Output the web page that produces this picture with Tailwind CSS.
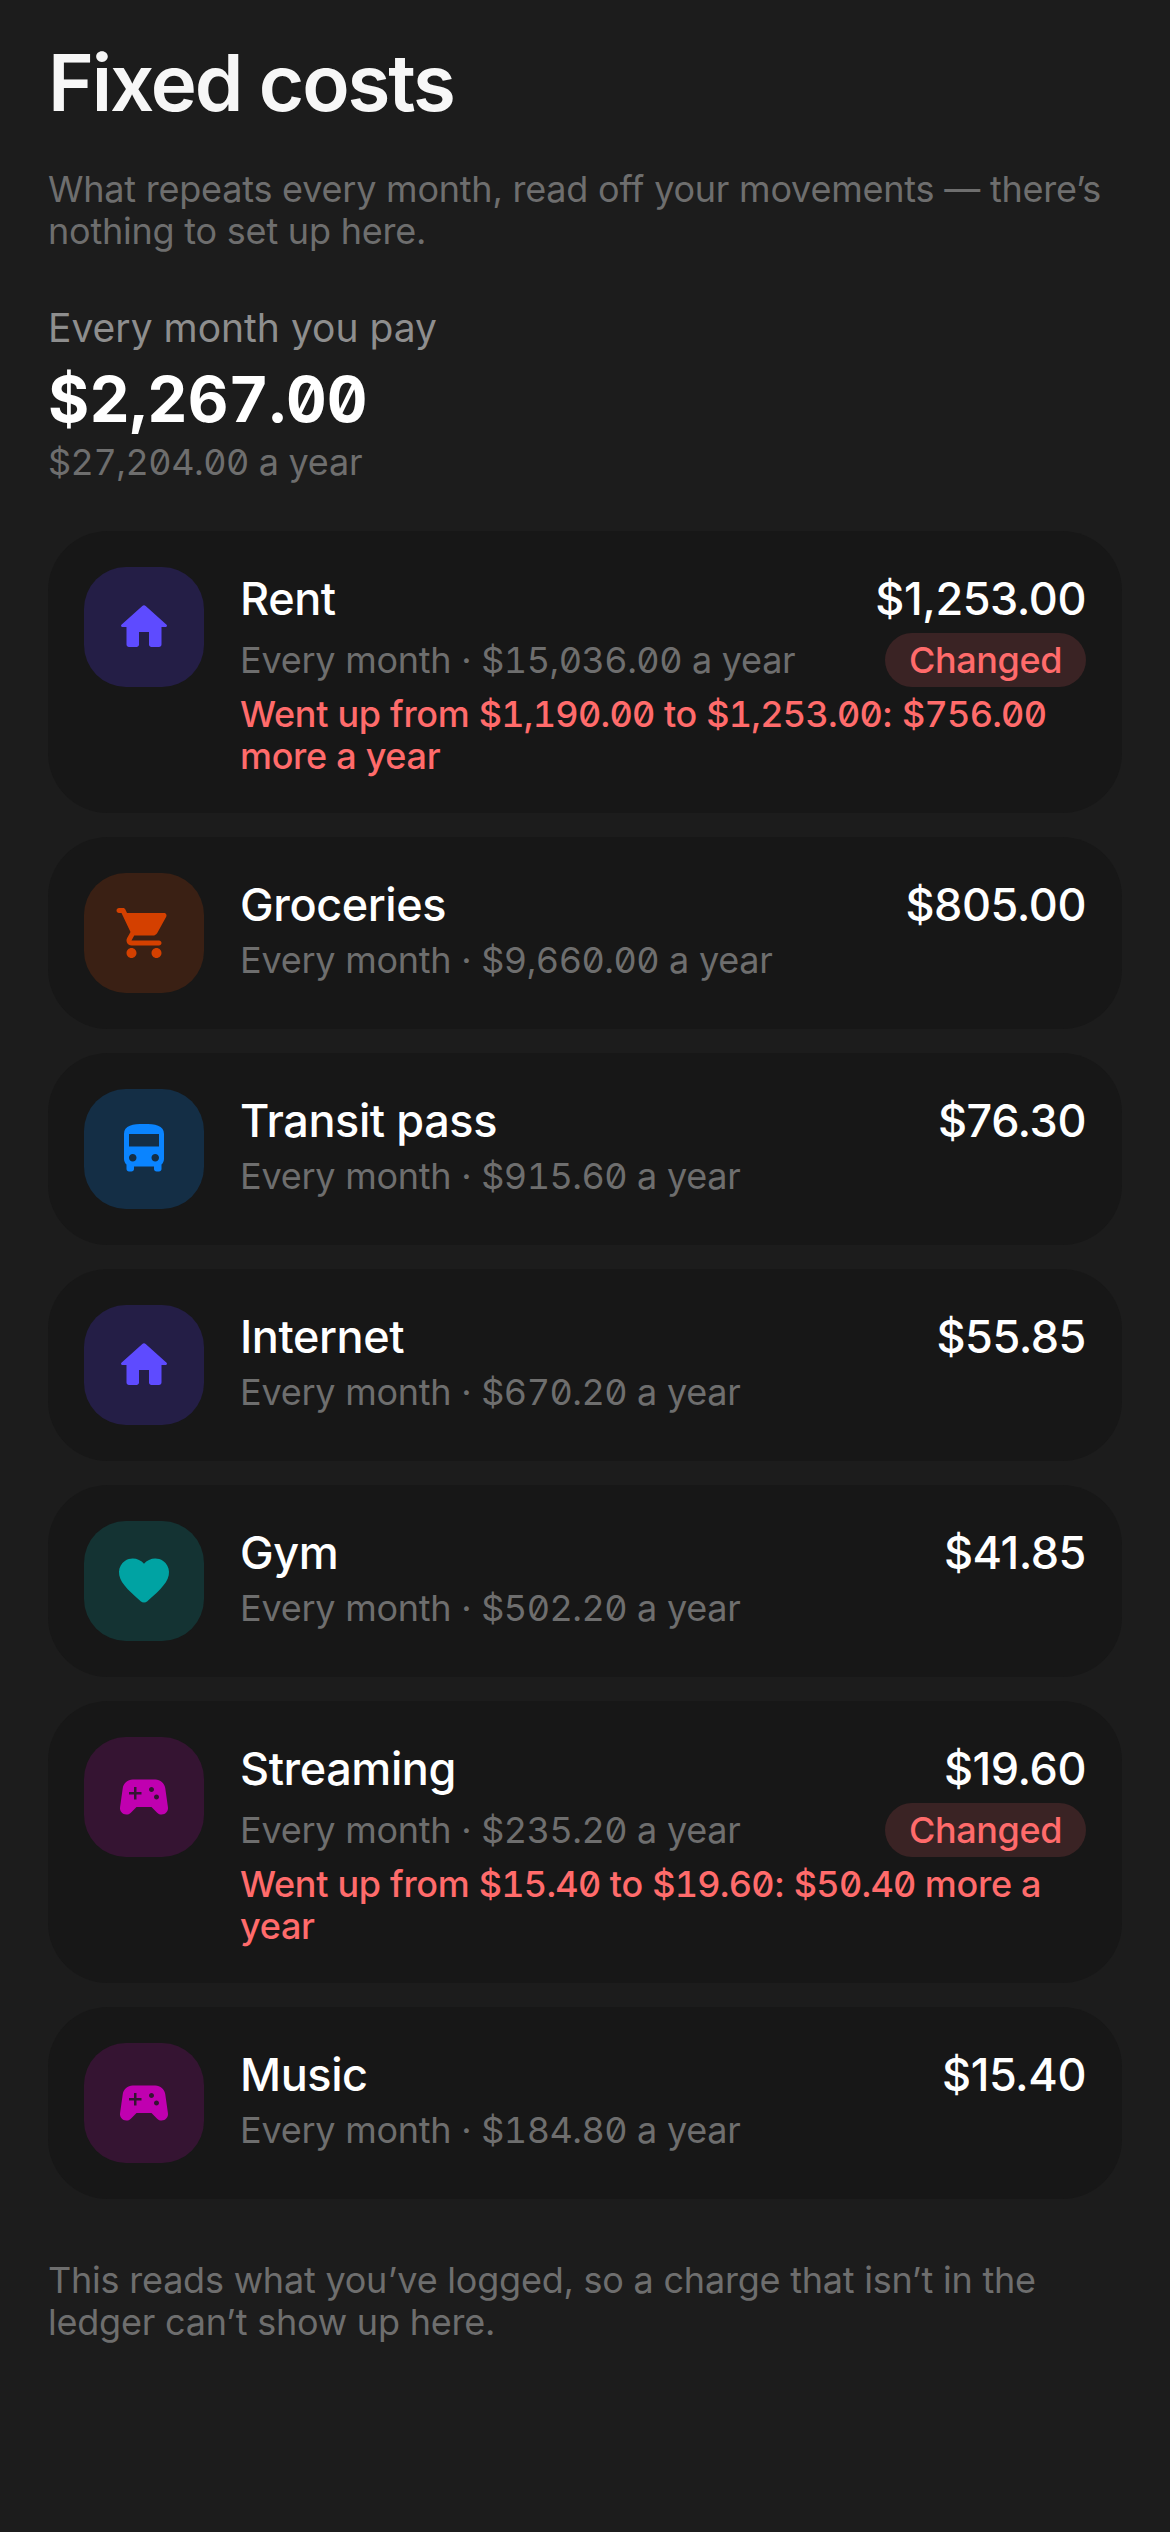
<!DOCTYPE html>
<html lang="en">
<head>
    <meta charset="UTF-8">
    <meta name="viewport" content="width=device-width, initial-scale=1.0">
    <title>Fixed costs</title>
    <script src="https://cdn.jsdelivr.net/npm/@tailwindcss/browser@4"></script>
</head>
<body class="bg-[#1c1c1c] font-['Inter',sans-serif] text-white">
    <div class="w-[1170px] h-[2532px] px-12 pt-[36px]">
        <!-- Header -->
        <h1 class="text-[78px] leading-[94px] font-semibold tracking-[-2.1px] text-[#f7f7f7]">Fixed costs</h1>
        <p class="mt-[38px] text-[36px] leading-[42px] tracking-[-0.22px] text-[#6e6e6e]">What repeats every month, read off your movements — there’s nothing to set up here.</p>

        <!-- Total -->
        <p class="mt-[52px] text-[39px] leading-[48px] text-[#8e8e8e]">Every month you pay</p>
        <p class="mt-[8px] text-[63px] leading-[78px] font-bold text-white tabular-nums slashed-zero">$2,267.00</p>
        <p class="mt-[3px] text-[36px] leading-[42px] tracking-[-0.25px] text-[#6e6e6e]"><span class="tabular-nums slashed-zero tracking-[-0.5px]">$27,204.00</span> a year</p>

        <!-- Rows -->
        <div class="mt-[48px] flex flex-col gap-6">
            <div class="bg-[#171717] rounded-[60px] p-9 flex gap-9">
                <div class="w-[120px] h-[120px] shrink-0 rounded-[42px] bg-[#241e46] flex items-center justify-center">
                    <svg class="w-[60px] h-[60px] fill-[#5e4bff]" viewBox="0 0 24 24"><path d="M10 19v-5h4v5c0 .55.45 1 1 1h3c.55 0 1-.45 1-1v-7h1.7c.46 0 .68-.57.33-.87L12.67 3.6c-.38-.34-.96-.34-1.34 0l-8.36 7.53c-.34.3-.13.87.33.87H5v7c0 .55.45 1 1 1h3c.55 0 1-.45 1-1z"/></svg>
                </div>
                <div class="flex-1 min-w-0 pt-[5px]">
                    <div class="flex justify-between items-center">
                        <span class="text-[45px] leading-[54px] font-medium tracking-[-0.4px]">Rent</span>
                        <span class="text-[45px] leading-[54px] font-medium tracking-[-0.45px]">$1,253.00</span>
                    </div>
                    <div class="mt-[7px] flex justify-between items-center">
                        <span class="text-[36px] leading-[42px] tracking-[-0.25px] text-[#6e6e6e]">Every month · <span class="tabular-nums slashed-zero tracking-[-0.5px]">$15,036.00</span> a year</span>
                        <span class="h-[54px] px-6 rounded-full bg-[#3a2324] text-[36px] leading-[54px] font-medium tracking-[-0.4px] text-[#ff6b6b]">Changed</span>
                    </div>
                    <p class="mt-[6px] text-[36px] leading-[42px] font-medium tracking-[-0.3px] text-[#ff6b6b]">Went up from <span class="tabular-nums slashed-zero tracking-[-0.75px]">$1,190.00</span> to <span class="tabular-nums slashed-zero tracking-[-0.75px]">$1,253.00</span>: <span class="tabular-nums slashed-zero tracking-[-0.75px]">$756.00</span> more a year</p>
                </div>
            </div>

            <div class="bg-[#171717] rounded-[60px] p-9 flex gap-9">
                <div class="w-[120px] h-[120px] shrink-0 rounded-[42px] bg-[#3a2014] flex items-center justify-center">
                    <svg class="w-[60px] h-[60px] fill-[#d44000]" viewBox="0 0 24 24"><path d="M7 18c-1.1 0-1.99.9-1.99 2S5.9 22 7 22s2-.9 2-2-.9-2-2-2zM1 3c0 .55.45 1 1 1h1l3.6 7.59-1.35 2.44C4.52 15.37 5.48 17 7 17h11c.55 0 1-.45 1-1s-.45-1-1-1H7l1.1-2h7.45c.75 0 1.41-.41 1.75-1.03l3.58-6.49c.37-.66-.11-1.48-.87-1.48H5.21l-.67-1.43c-.16-.35-.52-.57-.9-.57H2c-.55 0-1 .45-1 1zm16 15c-1.1 0-1.99.9-1.99 2s.89 2 1.99 2 2-.9 2-2-.9-2-2-2z"/></svg>
                </div>
                <div class="flex-1 min-w-0 pt-[5px]">
                    <div class="flex justify-between items-center">
                        <span class="text-[45px] leading-[54px] font-medium tracking-[-0.4px]">Groceries</span>
                        <span class="text-[45px] leading-[54px] font-medium tracking-[-0.45px]">$805.00</span>
                    </div>
                    <p class="mt-[7px] text-[36px] leading-[42px] tracking-[-0.25px] text-[#6e6e6e]">Every month · <span class="tabular-nums slashed-zero tracking-[-0.5px]">$9,660.00</span> a year</p>
                </div>
            </div>

            <div class="bg-[#171717] rounded-[60px] p-9 flex gap-9">
                <div class="w-[120px] h-[120px] shrink-0 rounded-[42px] bg-[#142e45] flex items-center justify-center">
                    <svg class="w-[60px] h-[60px] fill-[#0a84ff]" viewBox="0 0 24 24"><path d="M4 16c0 .88.39 1.67 1 2.22V20c0 .55.45 1 1 1h1c.55 0 1-.45 1-1v-1h8v1c0 .55.45 1 1 1h1c.55 0 1-.45 1-1v-1.78c.61-.55 1-1.34 1-2.22V6c0-3.5-3.58-4-8-4s-8 .5-8 4v10zm3.5 1c-.83 0-1.5-.67-1.5-1.5S6.67 14 7.5 14s1.5.67 1.5 1.5S8.33 17 7.5 17zm9 0c-.83 0-1.5-.67-1.5-1.5s.67-1.5 1.5-1.5 1.5.67 1.5 1.5-.67 1.5-1.5 1.5zm1.5-6H6V6h12v5z"/></svg>
                </div>
                <div class="flex-1 min-w-0 pt-[5px]">
                    <div class="flex justify-between items-center">
                        <span class="text-[45px] leading-[54px] font-medium tracking-[-0.4px]">Transit pass</span>
                        <span class="text-[45px] leading-[54px] font-medium tracking-[-0.45px]">$76.30</span>
                    </div>
                    <p class="mt-[7px] text-[36px] leading-[42px] tracking-[-0.25px] text-[#6e6e6e]">Every month · <span class="tabular-nums slashed-zero tracking-[-0.5px]">$915.60</span> a year</p>
                </div>
            </div>

            <div class="bg-[#171717] rounded-[60px] p-9 flex gap-9">
                <div class="w-[120px] h-[120px] shrink-0 rounded-[42px] bg-[#241e46] flex items-center justify-center">
                    <svg class="w-[60px] h-[60px] fill-[#5e4bff]" viewBox="0 0 24 24"><path d="M10 19v-5h4v5c0 .55.45 1 1 1h3c.55 0 1-.45 1-1v-7h1.7c.46 0 .68-.57.33-.87L12.67 3.6c-.38-.34-.96-.34-1.34 0l-8.36 7.53c-.34.3-.13.87.33.87H5v7c0 .55.45 1 1 1h3c.55 0 1-.45 1-1z"/></svg>
                </div>
                <div class="flex-1 min-w-0 pt-[5px]">
                    <div class="flex justify-between items-center">
                        <span class="text-[45px] leading-[54px] font-medium tracking-[-0.4px]">Internet</span>
                        <span class="text-[45px] leading-[54px] font-medium tracking-[-0.45px]">$55.85</span>
                    </div>
                    <p class="mt-[7px] text-[36px] leading-[42px] tracking-[-0.25px] text-[#6e6e6e]">Every month · <span class="tabular-nums slashed-zero tracking-[-0.5px]">$670.20</span> a year</p>
                </div>
            </div>

            <div class="bg-[#171717] rounded-[60px] p-9 flex gap-9">
                <div class="w-[120px] h-[120px] shrink-0 rounded-[42px] bg-[#143333] flex items-center justify-center">
                    <svg class="w-[60px] h-[60px] fill-[#00a3a3]" viewBox="0 0 24 24"><path d="M13.35 20.13c-.76.69-1.93.69-2.69-.01l-.11-.1C5.3 15.27 1.87 12.16 2 8.28c.06-1.7.93-3.33 2.34-4.29 2.64-1.8 5.9-.96 7.66 1.1 1.76-2.06 5.02-2.91 7.66-1.1 1.41.96 2.28 2.59 2.34 4.29.14 3.88-3.3 6.99-8.55 11.76l-.1.09z"/></svg>
                </div>
                <div class="flex-1 min-w-0 pt-[5px]">
                    <div class="flex justify-between items-center">
                        <span class="text-[45px] leading-[54px] font-medium tracking-[-0.4px]">Gym</span>
                        <span class="text-[45px] leading-[54px] font-medium tracking-[-0.45px]">$41.85</span>
                    </div>
                    <p class="mt-[7px] text-[36px] leading-[42px] tracking-[-0.25px] text-[#6e6e6e]">Every month · <span class="tabular-nums slashed-zero tracking-[-0.5px]">$502.20</span> a year</p>
                </div>
            </div>

            <div class="bg-[#171717] rounded-[60px] p-9 flex gap-9">
                <div class="w-[120px] h-[120px] shrink-0 rounded-[42px] bg-[#351432] flex items-center justify-center">
                    <svg class="w-[60px] h-[60px] fill-[#c000b0]" viewBox="0 0 24 24"><path d="M21.58 16.09l-1.09-7.66C20.21 6.46 18.52 5 16.53 5H7.47C5.48 5 3.79 6.46 3.51 8.43l-1.09 7.66C2.2 17.63 3.39 19 4.94 19c.68 0 1.32-.27 1.8-.75L9 16h6l2.25 2.25c.48.48 1.13.75 1.8.75 1.56 0 2.75-1.37 2.53-2.91zM11 11H9v2H8v-2H6v-1h2V8h1v2h2v1zm4-1c-.55 0-1-.45-1-1s.45-1 1-1 1 .45 1 1-.45 1-1 1zm2 3c-.55 0-1-.45-1-1s.45-1 1-1 1 .45 1 1-.45 1-1 1z"/></svg>
                </div>
                <div class="flex-1 min-w-0 pt-[5px]">
                    <div class="flex justify-between items-center">
                        <span class="text-[45px] leading-[54px] font-medium tracking-[-0.4px]">Streaming</span>
                        <span class="text-[45px] leading-[54px] font-medium tracking-[-0.45px]">$19.60</span>
                    </div>
                    <div class="mt-[7px] flex justify-between items-center">
                        <span class="text-[36px] leading-[42px] tracking-[-0.25px] text-[#6e6e6e]">Every month · <span class="tabular-nums slashed-zero tracking-[-0.5px]">$235.20</span> a year</span>
                        <span class="h-[54px] px-6 rounded-full bg-[#3a2324] text-[36px] leading-[54px] font-medium tracking-[-0.4px] text-[#ff6b6b]">Changed</span>
                    </div>
                    <p class="mt-[6px] text-[36px] leading-[42px] font-medium tracking-[-0.3px] text-[#ff6b6b]">Went up from <span class="tabular-nums slashed-zero tracking-[-0.75px]">$15.40</span> to <span class="tabular-nums slashed-zero tracking-[-0.75px]">$19.60</span>: <span class="tabular-nums slashed-zero tracking-[-0.75px]">$50.40</span> more a year</p>
                </div>
            </div>

            <div class="bg-[#171717] rounded-[60px] p-9 flex gap-9">
                <div class="w-[120px] h-[120px] shrink-0 rounded-[42px] bg-[#351432] flex items-center justify-center">
                    <svg class="w-[60px] h-[60px] fill-[#c000b0]" viewBox="0 0 24 24"><path d="M21.58 16.09l-1.09-7.66C20.21 6.46 18.52 5 16.53 5H7.47C5.48 5 3.79 6.46 3.51 8.43l-1.09 7.66C2.2 17.63 3.39 19 4.94 19c.68 0 1.32-.27 1.8-.75L9 16h6l2.25 2.25c.48.48 1.13.75 1.8.75 1.56 0 2.75-1.37 2.53-2.91zM11 11H9v2H8v-2H6v-1h2V8h1v2h2v1zm4-1c-.55 0-1-.45-1-1s.45-1 1-1 1 .45 1 1-.45 1-1 1zm2 3c-.55 0-1-.45-1-1s.45-1 1-1 1 .45 1 1-.45 1-1 1z"/></svg>
                </div>
                <div class="flex-1 min-w-0 pt-[5px]">
                    <div class="flex justify-between items-center">
                        <span class="text-[45px] leading-[54px] font-medium tracking-[-0.4px]">Music</span>
                        <span class="text-[45px] leading-[54px] font-medium tracking-[-0.45px]">$15.40</span>
                    </div>
                    <p class="mt-[7px] text-[36px] leading-[42px] tracking-[-0.25px] text-[#6e6e6e]">Every month · <span class="tabular-nums slashed-zero tracking-[-0.5px]">$184.80</span> a year</p>
                </div>
            </div>
        </div>

        <p class="mt-[60px] text-[36px] leading-[42px] tracking-[-0.22px] text-[#6e6e6e]">This reads what you’ve logged, so a charge that isn’t in the ledger can’t show up here.</p>
    </div>
</body>
</html>
